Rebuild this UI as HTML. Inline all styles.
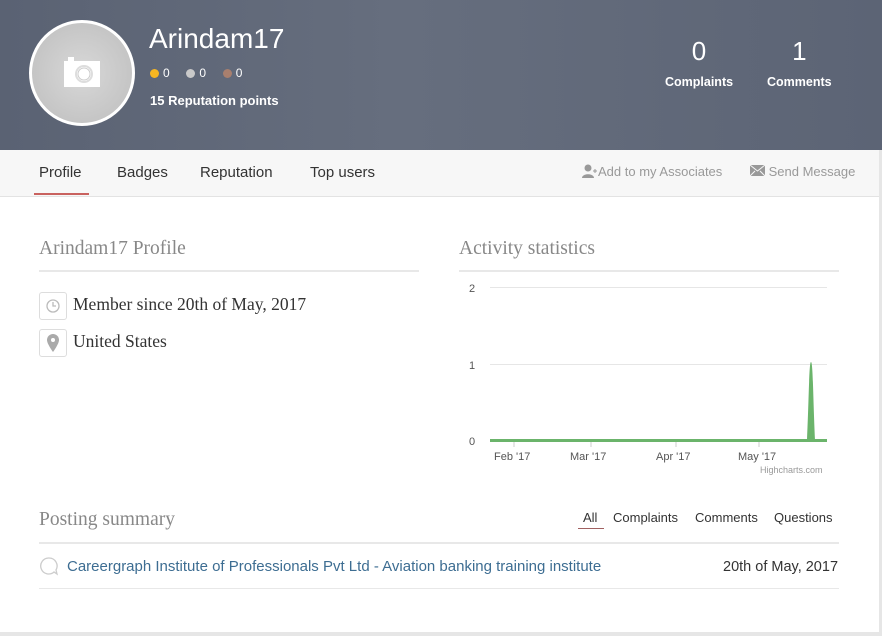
<!DOCTYPE html>
<html><head><style>
*{margin:0;padding:0;box-sizing:border-box}
body{width:882px;height:636px;background:#e6e6e6;font-family:"Liberation Sans",sans-serif;position:relative;overflow:hidden}
.hdr{position:absolute;left:0;top:0;width:882px;height:150px;background:linear-gradient(90deg,#5a6273 0%,#666e7e 45%,#5c6475 100%)}
.av{position:absolute;left:29px;top:20px;width:106px;height:106px;border-radius:50%;background:radial-gradient(circle,#d8d8d8,#bdbdbd);border:3px solid #fff}
.name{position:absolute;left:149px;top:23px;color:#fff;font-size:28px;font-weight:300}
.dots{position:absolute;left:150px;top:66px;color:#fff;font-size:12px}
.dot{display:inline-block;width:9px;height:9px;border-radius:50%;vertical-align:-1px;margin-right:4px}
.rep{position:absolute;left:150px;top:93px;color:#fff;font-size:13px;font-weight:bold}
.stat{position:absolute;top:36px;color:#fff;text-align:center;font-size:12.5px;font-weight:bold}
.stat b{display:block;font-size:26px;font-weight:normal;margin-bottom:8px}
.tabs{position:absolute;left:0;top:150px;width:879px;height:47px;background:#f7f7f7;border-bottom:1px solid #e3e3e3}
.tab{position:absolute;top:14px;font-size:15px;color:#333}
.act{position:absolute;top:14px;font-size:13px;color:#999}
.main{position:absolute;left:0;top:197px;width:879px;height:435px;background:#fff}
.h2{position:absolute;font-family:"Liberation Serif",serif;font-size:19.5px;color:#888}
.line{position:absolute;height:2px;background:#e8e8e8}
.info{position:absolute;left:39px;font-family:"Liberation Serif",serif;font-size:17.5px;color:#333}
.ib{display:inline-block;width:28px;height:28px;border:1px solid #ddd;border-radius:3px;vertical-align:middle;margin-right:6px;text-align:center}
</style></head><body>
<div class="hdr">
 <div class="av"><svg style="position:absolute;left:30px;top:32px" width="40" height="34" viewBox="0 0 40 34"><rect x="2" y="6" width="36" height="26" fill="#fff"/><rect x="6" y="2" width="6" height="5" fill="#fff"/><circle cx="22" cy="19" r="9" fill="#ddd"/><circle cx="22" cy="19" r="7" fill="#fff"/><circle cx="22" cy="19" r="6" fill="none" stroke="#ccc"/></svg></div>
 <div class="name">Arindam17</div>
 <div class="dots"><span class="dot" style="background:#f6b622"></span>0 &nbsp;&nbsp;&nbsp;&nbsp;<span class="dot" style="background:#c9c9c9"></span>0 &nbsp;&nbsp;&nbsp;&nbsp;<span class="dot" style="background:#a87f6e"></span>0</div>
 <div class="rep">15 Reputation points</div>
 <div class="stat" style="left:665px"><b>0</b>Complaints</div>
 <div class="stat" style="left:767px"><b>1</b>Comments</div>
</div>
<div class="tabs">
 <div class="tab" style="left:39px">Profile</div>
 <div style="position:absolute;left:34px;top:43px;width:55px;height:2px;background:#c9625f"></div>
 <div class="tab" style="left:117px">Badges</div>
 <div class="tab" style="left:200px">Reputation</div>
 <div class="tab" style="left:310px">Top users</div>
 <div class="act" style="left:582px"><svg width="16" height="14" viewBox="0 0 16 14" style="vertical-align:-2px"><circle cx="6" cy="4" r="3.5" fill="#999"/><path d="M0 14c0-5 12-5 12 0z" fill="#999"/><path d="M13 5v4M11 7h4" stroke="#999"/></svg>Add to my Associates</div>
 <div class="act" style="left:750px"><svg width="15" height="11" viewBox="0 0 15 11" style="vertical-align:0"><rect width="15" height="11" fill="#999"/><path d="M0 0l7.5 6L15 0M0 11l5-5M15 11l-5-5" stroke="#f7f7f7" fill="none"/></svg> Send Message</div>
</div>
<div class="main">
 <div class="h2" style="left:39px;top:41px">Arindam17 Profile</div>
 <div class="line" style="left:39px;top:73px;width:380px"></div>
 <div class="info" style="top:95px"><span class="ib"><svg width="16" height="16" viewBox="0 0 16 16" style="margin-top:5px"><circle cx="8" cy="8" r="6" fill="none" stroke="#bbb" stroke-width="1.3"/><path d="M8 4v4h3" stroke="#bbb" fill="none" stroke-width="1.3"/></svg></span>Member since 20th of May, 2017</div>
 <div class="info" style="top:132px"><span class="ib"><svg width="12" height="18" viewBox="0 0 12 18" style="margin-top:4px"><path d="M6 0a6 6 0 0 0-6 6c0 4 6 12 6 12s6-8 6-12a6 6 0 0 0-6-6z" fill="#aaa"/><circle cx="6" cy="6" r="2" fill="#fff"/></svg></span>United States</div>
 <div class="h2" style="left:459px;top:41px">Activity statistics</div>
 <div class="line" style="left:459px;top:73px;width:380px"></div>
 <svg style="position:absolute;left:459px;top:80px" width="380" height="200" viewBox="0 0 380 200">
  <g font-family="Liberation Sans" font-size="11" fill="#555">
  <text x="10" y="15">2</text><text x="10" y="92">1</text><text x="10" y="168">0</text>
  <text x="35" y="183">Feb '17</text><text x="111" y="183">Mar '17</text><text x="197" y="183">Apr '17</text><text x="279" y="183">May '17</text>
  <text x="301" y="196" font-size="9" fill="#999">Highcharts.com</text></g>
  <path d="M31 10.5H368M31 87.5H368" stroke="#e6e6e6"/>
  <path d="M55 164v6M132 164v6M217 164v6M300 164v6" stroke="#ccc"/>
  <path d="M31 163.5H368" stroke="#6bb46b" stroke-width="3"/>
  <path d="M348 163 C350 120 350 85 352 85 C354 85 354 120 356 163z" fill="#6bb46b"/>
 </svg>
 <div class="h2" style="left:39px;top:312px">Posting summary</div>
 <div style="position:absolute;top:313px;left:583px;font-size:13px;color:#333">All</div>
 <div style="position:absolute;left:578px;top:331px;width:26px;height:1px;background:#a06060"></div>
 <div style="position:absolute;top:313px;left:613px;font-size:13px;color:#333">Complaints</div>
 <div style="position:absolute;top:313px;left:695px;font-size:13px;color:#333">Comments</div>
 <div style="position:absolute;top:313px;left:774px;font-size:13px;color:#333">Questions</div>
 <div class="line" style="left:39px;top:345px;width:800px"></div>
 <svg style="position:absolute;left:39px;top:359px" width="20" height="20"><path d="M10 2a8 8 0 1 0 5 14l3 2-1-4a8 8 0 0 0-7-12z" fill="none" stroke="#ccc" stroke-width="1.3"/></svg>
 <div style="position:absolute;left:67px;top:361px;font-size:15px;color:#3d6d92">Careergraph Institute of Professionals Pvt Ltd - Aviation banking training institute</div>
 <div style="position:absolute;left:723px;top:362px;font-size:14.5px;color:#333">20th of May, 2017</div>
 <div class="line" style="left:39px;top:391px;width:800px;height:1px"></div>
</div>
</body></html>
